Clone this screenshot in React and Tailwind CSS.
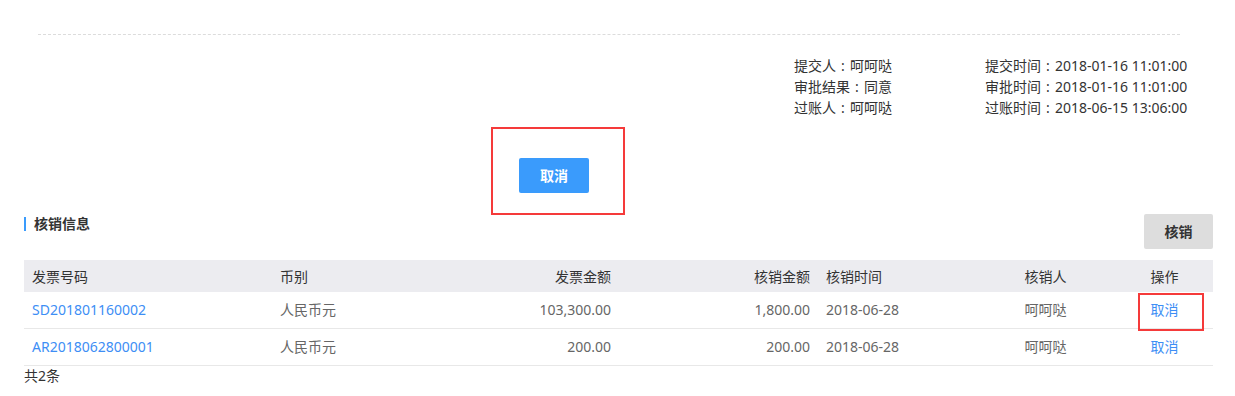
import React from "react";

const rows = [
  { no: "SD201801160002", cur: "人民币元", amt: "103,300.00", wo: "1,800.00", date: "2018-06-28", who: "呵呵哒", mark: true },
  { no: "AR2018062800001", cur: "人民币元", amt: "200.00", wo: "200.00", date: "2018-06-28", who: "呵呵哒", mark: false },
];

const cols = "grid grid-cols-[248px_148px_199px_199px_157px_141px_97px]";

function Pair({ k, v }) {
  return (
    <div>
      {k}
      <span className="inline-block w-[14px] text-center">:</span>
      {v}
    </div>
  );
}

export default function App() {
  return (
    <div
      className="w-[1235px] h-[396px] bg-white overflow-hidden text-[14px] text-[#333]"
      style={{ fontFamily: '"Noto Sans", "Noto Sans CJK SC", sans-serif' }}
    >
      <div className="pt-[34px] pl-[38px]">
        <div className="w-[1142px] border-t border-dashed border-[#dcdcdc]" />
      </div>

      <div className="mt-[20px] pl-[794px] grid grid-cols-[191px_auto] leading-[21px] text-[#333]">
        <div>
          <Pair k="提交人" v="呵呵哒" />
          <Pair k="审批结果" v="同意" />
          <Pair k="过账人" v="呵呵哒" />
        </div>
        <div>
          <Pair k="提交时间" v="2018-01-16 11:01:00" />
          <Pair k="审批时间" v="2018-01-16 11:01:00" />
          <Pair k="过账时间" v="2018-06-15 13:06:00" />
        </div>
      </div>

      <div className="mt-[40px] pl-[519px]">
        <div className="relative w-[70px]">
          <button className="w-[70px] h-[35px] rounded-[2px] bg-[#3a9bfc] text-white font-bold leading-[35px]">
            取消
          </button>
          <div className="absolute left-[-28px] top-[-31px] w-[134px] h-[88px] border-[2.5px] border-[#f53a3a]" />
        </div>
      </div>

      <div className="mt-[21px] flex items-start justify-between pl-[24px] pr-[22px]">
        <div className="mt-[3px] border-l-2 border-[#3a9bfc] pl-[8px] leading-[14px] font-bold text-[#333]">
          核销信息
        </div>
        <button className="w-[69px] h-[35px] rounded-[2px] bg-[#dddddd] text-[#333] font-bold leading-[35px]">
          核销
        </button>
      </div>

      <div className="mt-[11px] ml-[24px] w-[1189px]">
        <div className={`${cols} h-[32px] items-center bg-[#ececf0] text-[#333]`}>
          <div className="pl-[8px]">发票号码</div>
          <div className="pl-[8px]">币别</div>
          <div className="pr-[8px] text-right">发票金额</div>
          <div className="pr-[8px] text-right">核销金额</div>
          <div className="pl-[8px]">核销时间</div>
          <div className="text-center">核销人</div>
          <div className="text-center">操作</div>
        </div>
        {rows.map((r) => (
          <div
            key={r.no}
            className={`${cols} h-[37px] items-center border-b border-[#e8e8e8] text-[#666]`}
          >
            <div className="pl-[8px] pb-[1px] text-[#3d8ef5]">{r.no}</div>
            <div className="pl-[8px] pb-[1px]">{r.cur}</div>
            <div className="pr-[8px] pb-[1px] text-right">{r.amt}</div>
            <div className="pr-[8px] pb-[1px] text-right">{r.wo}</div>
            <div className="pl-[8px] pb-[1px]">{r.date}</div>
            <div className="text-center pb-[1px]">{r.who}</div>
            <div className="relative h-full flex items-center justify-center pb-[1px] text-[#3d8ef5]">
              取消
              {r.mark && (
                <div className="absolute left-[22px] top-[1px] w-[66px] h-[38px] border-[2.5px] border-[#f53a3a]" />
              )}
            </div>
          </div>
        ))}
        <div className="leading-[20px] text-[#333]">共2条</div>
      </div>
    </div>
  );
}
